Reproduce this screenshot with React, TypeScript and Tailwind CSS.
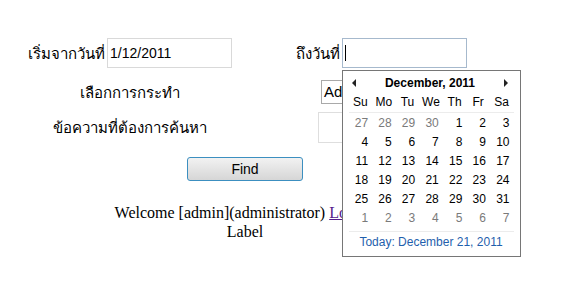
import React from 'react';

const thai = { fontFamily: 'Tahoma, "Noto Sans", "DejaVu Sans", sans-serif' };

const weeks = [
  [27, 28, 29, 30, 1, 2, 3],
  [4, 5, 6, 7, 8, 9, 10],
  [11, 12, 13, 14, 15, 16, 17],
  [18, 19, 20, 21, 22, 23, 24],
  [25, 26, 27, 28, 29, 30, 31],
  [1, 2, 3, 4, 5, 6, 7],
];

function Calendar() {
  return (
    <div
      className="absolute left-[-1px] top-[31px] w-[179px] h-[187px] bg-white border border-[#767676] px-[6px] pt-[3px] z-10"
      style={{ fontFamily: '"Liberation Sans", Tahoma, sans-serif' }}
    >
      {/* header */}
      <div className="flex items-center justify-between h-[18px] px-[2px] text-[12px] leading-[18px]">
        <svg width="5" height="8" viewBox="0 0 5 8" className="ml-[1px]">
          <path d="M4 0 L0 4 L4 8 Z" fill="#222" />
        </svg>
        <span className="font-bold text-black">December, 2011</span>
        <svg width="5" height="8" viewBox="0 0 5 8" className="mr-[3px]">
          <path d="M1 0 L5 4 L1 8 Z" fill="#222" />
        </svg>
      </div>
      {/* day names */}
      <div className="grid grid-cols-7 h-[21px] items-center border-b border-[#ececec] text-[12px] leading-[16px] text-black">
        {['Su', 'Mo', 'Tu', 'We', 'Th', 'Fr', 'Sa'].map((d) => (
          <span key={d} className="text-center">{d}</span>
        ))}
      </div>
      {/* days */}
      <div>
        {weeks.map((w, i) => (
          <div key={i} className="grid grid-cols-7 h-[19px] items-center text-[12px] leading-[16px]">
            {w.map((d, j) => {
              const other = (i === 0 && d > 20) || i === 5;
              return (
                <span
                  key={j}
                  className={`text-right pr-[4px] ${other ? 'text-[#7a7a7a]' : 'text-black'}`}
                >
                  {d}
                </span>
              );
            })}
          </div>
        ))}
      </div>
      <div className="mt-[4px] border-t border-[#ececec] pt-[2px] text-center text-[12px] leading-[16px] text-[#1f5fad]">
        Today: December 21, 2011
      </div>
    </div>
  );
}

export default function App() {
  return (
    <div className="w-[584px] h-[283px] bg-white relative overflow-hidden">
      <div className="pt-[38px]">
        {/* row 1 */}
        <div className="flex h-[30px]">
          <div className="w-[216px] ml-[22px] flex items-center justify-center gap-[2px]">
            <span className="text-[15px] text-black" style={thai}>เริ่มจากวันที่</span>
            <div
              className="w-[125px] h-[30px] border border-[#d9d9d9] flex items-center pl-[2px] text-[14px] text-black"
              style={{ fontFamily: '"Liberation Sans", Arial, sans-serif' }}
            >
              1/12/2011
            </div>
          </div>
          <div className="w-[286px] flex items-center justify-center gap-[2px]">
            <span className="text-[15px] text-black" style={thai}>ถึงวันที่</span>
            <div className="relative w-[125px] h-[30px] border border-[#a6b9cd] flex items-center pl-[2px]">
              <span className="w-px h-[16px] bg-black" />
              <Calendar />
            </div>
          </div>
        </div>
        {/* row 2 */}
        <div className="flex h-[24px] mt-[12px]">
          <div className="w-[216px] ml-[22px] flex items-center justify-center">
            <span className="text-[15px] text-black" style={thai}>เลือกการกระทำ</span>
          </div>
          <div className="w-[286px] flex items-center justify-center">
            <div
              className="w-[120px] h-[24px] border border-[#a9a9a9] flex items-center pl-[2px] text-[15px] text-black"
              style={{ fontFamily: '"Liberation Sans", Arial, sans-serif' }}
            >
              Administrator
            </div>
          </div>
        </div>
        {/* row 3 */}
        <div className="flex h-[31px] mt-[8px]">
          <div className="w-[216px] ml-[22px] flex items-center justify-center">
            <span className="text-[15px] text-black" style={thai}>ข้อความที่ต้องการค้นหา</span>
          </div>
          <div className="w-[286px] flex items-center justify-center">
            <div className="w-[126px] h-[31px] border border-[#dedede]" />
          </div>
        </div>
        {/* find */}
        <div className="w-[490px] flex justify-center mt-[14px]">
          <button
            className="w-[116px] h-[24px] rounded-[3px] border border-[#3c8fc0] bg-gradient-to-b from-[#f2f2f2] to-[#d6d6d6] text-[14px] text-black leading-none"
            style={{ fontFamily: '"Liberation Sans", Arial, sans-serif' }}
          >
            Find
          </button>
        </div>
        {/* welcome */}
        <div
          className="w-[490px] text-center text-[16px] leading-[19px] text-black mt-[22px]"
          style={{ fontFamily: '"Liberation Serif", "Times New Roman", serif' }}
        >
          <div>
            Welcome [admin](administrator) <a className="text-[#551a8b] underline">Logout</a>
          </div>
          <div>Label</div>
        </div>
      </div>
    </div>
  );
}
